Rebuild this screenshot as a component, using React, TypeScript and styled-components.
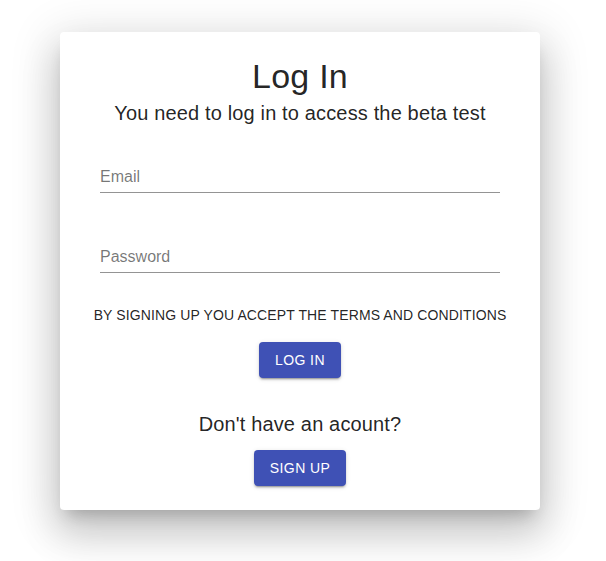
import React from "react";
import styled, { createGlobalStyle } from "styled-components";

const GlobalStyle = createGlobalStyle`
  html, body {
    margin: 0;
    padding: 0;
    background: #fff;
    font-family: "Liberation Sans", Arial, Helvetica, sans-serif;
  }
`;

const Page = styled.main`
  width: 600px;
  min-height: 561px;
  box-sizing: border-box;
  padding: 32px 0 51px;
  display: flex;
  justify-content: center;
  align-items: flex-start;
`;

const Card = styled.section`
  width: 480px;
  box-sizing: border-box;
  padding: 23px 0 24px;
  background: #fff;
  border-radius: 4px;
  box-shadow: 0px 11px 15px -7px rgba(0, 0, 0, 0.2),
    0px 24px 38px 3px rgba(0, 0, 0, 0.14), 0px 9px 46px 8px rgba(0, 0, 0, 0.12);
  display: flex;
  flex-direction: column;
  align-items: center;
  color: rgba(0, 0, 0, 0.87);
`;

const Title = styled.h1`
  margin: 0;
  font-size: 34px;
  font-weight: 400;
  line-height: 42px;
  letter-spacing: 0.25px;
`;

const Subtitle = styled.h2<{ $gap?: number }>`
  margin: ${(p) => p.$gap ?? 0}px 0 0;
  font-size: 20px;
  font-weight: 400;
  line-height: 32px;
  letter-spacing: 0.15px;
`;

const Input = styled.input<{ $gap: number }>`
  display: block;
  width: 400px;
  box-sizing: border-box;
  margin: ${(p) => p.$gap}px 0 0;
  padding: 6px 0;
  border: none;
  border-bottom: 1px solid rgba(0, 0, 0, 0.42);
  font-family: inherit;
  font-size: 16px;
  line-height: 19px;
  color: rgba(0, 0, 0, 0.87);
  outline: none;
  background: transparent;

  &::placeholder {
    color: rgba(0, 0, 0, 0.54);
  }
`;

const Terms = styled.p`
  margin: 30px 0 0;
  font-size: 14px;
  line-height: 24px;
  letter-spacing: 0.12px;
  text-transform: uppercase;
`;

const Button = styled.button<{ $gap: number }>`
  margin: ${(p) => p.$gap}px 0 0;
  height: 36px;
  padding: 0 16px;
  border: none;
  border-radius: 4px;
  background: #3f51b5;
  color: #fff;
  font-family: inherit;
  font-size: 14px;
  letter-spacing: 0.4px;
  text-transform: uppercase;
  cursor: pointer;
  box-shadow: 0px 3px 1px -2px rgba(0, 0, 0, 0.2),
    0px 2px 2px 0px rgba(0, 0, 0, 0.14), 0px 1px 5px 0px rgba(0, 0, 0, 0.12);
`;

export default function App() {
  return (
    <>
      <GlobalStyle />
      <Page>
        <Card>
          <Title>Log In</Title>
          <Subtitle>You need to log in to access the beta test</Subtitle>
          <Input $gap={32} type="email" placeholder="Email" />
          <Input $gap={48} type="password" placeholder="Password" />
          <Terms>By signing up you accept the terms and conditions</Terms>
          <Button $gap={15}>Log In</Button>
          <Subtitle $gap={30}>Don't have an acount?</Subtitle>
          <Button $gap={10}>Sign Up</Button>
        </Card>
      </Page>
    </>
  );
}
